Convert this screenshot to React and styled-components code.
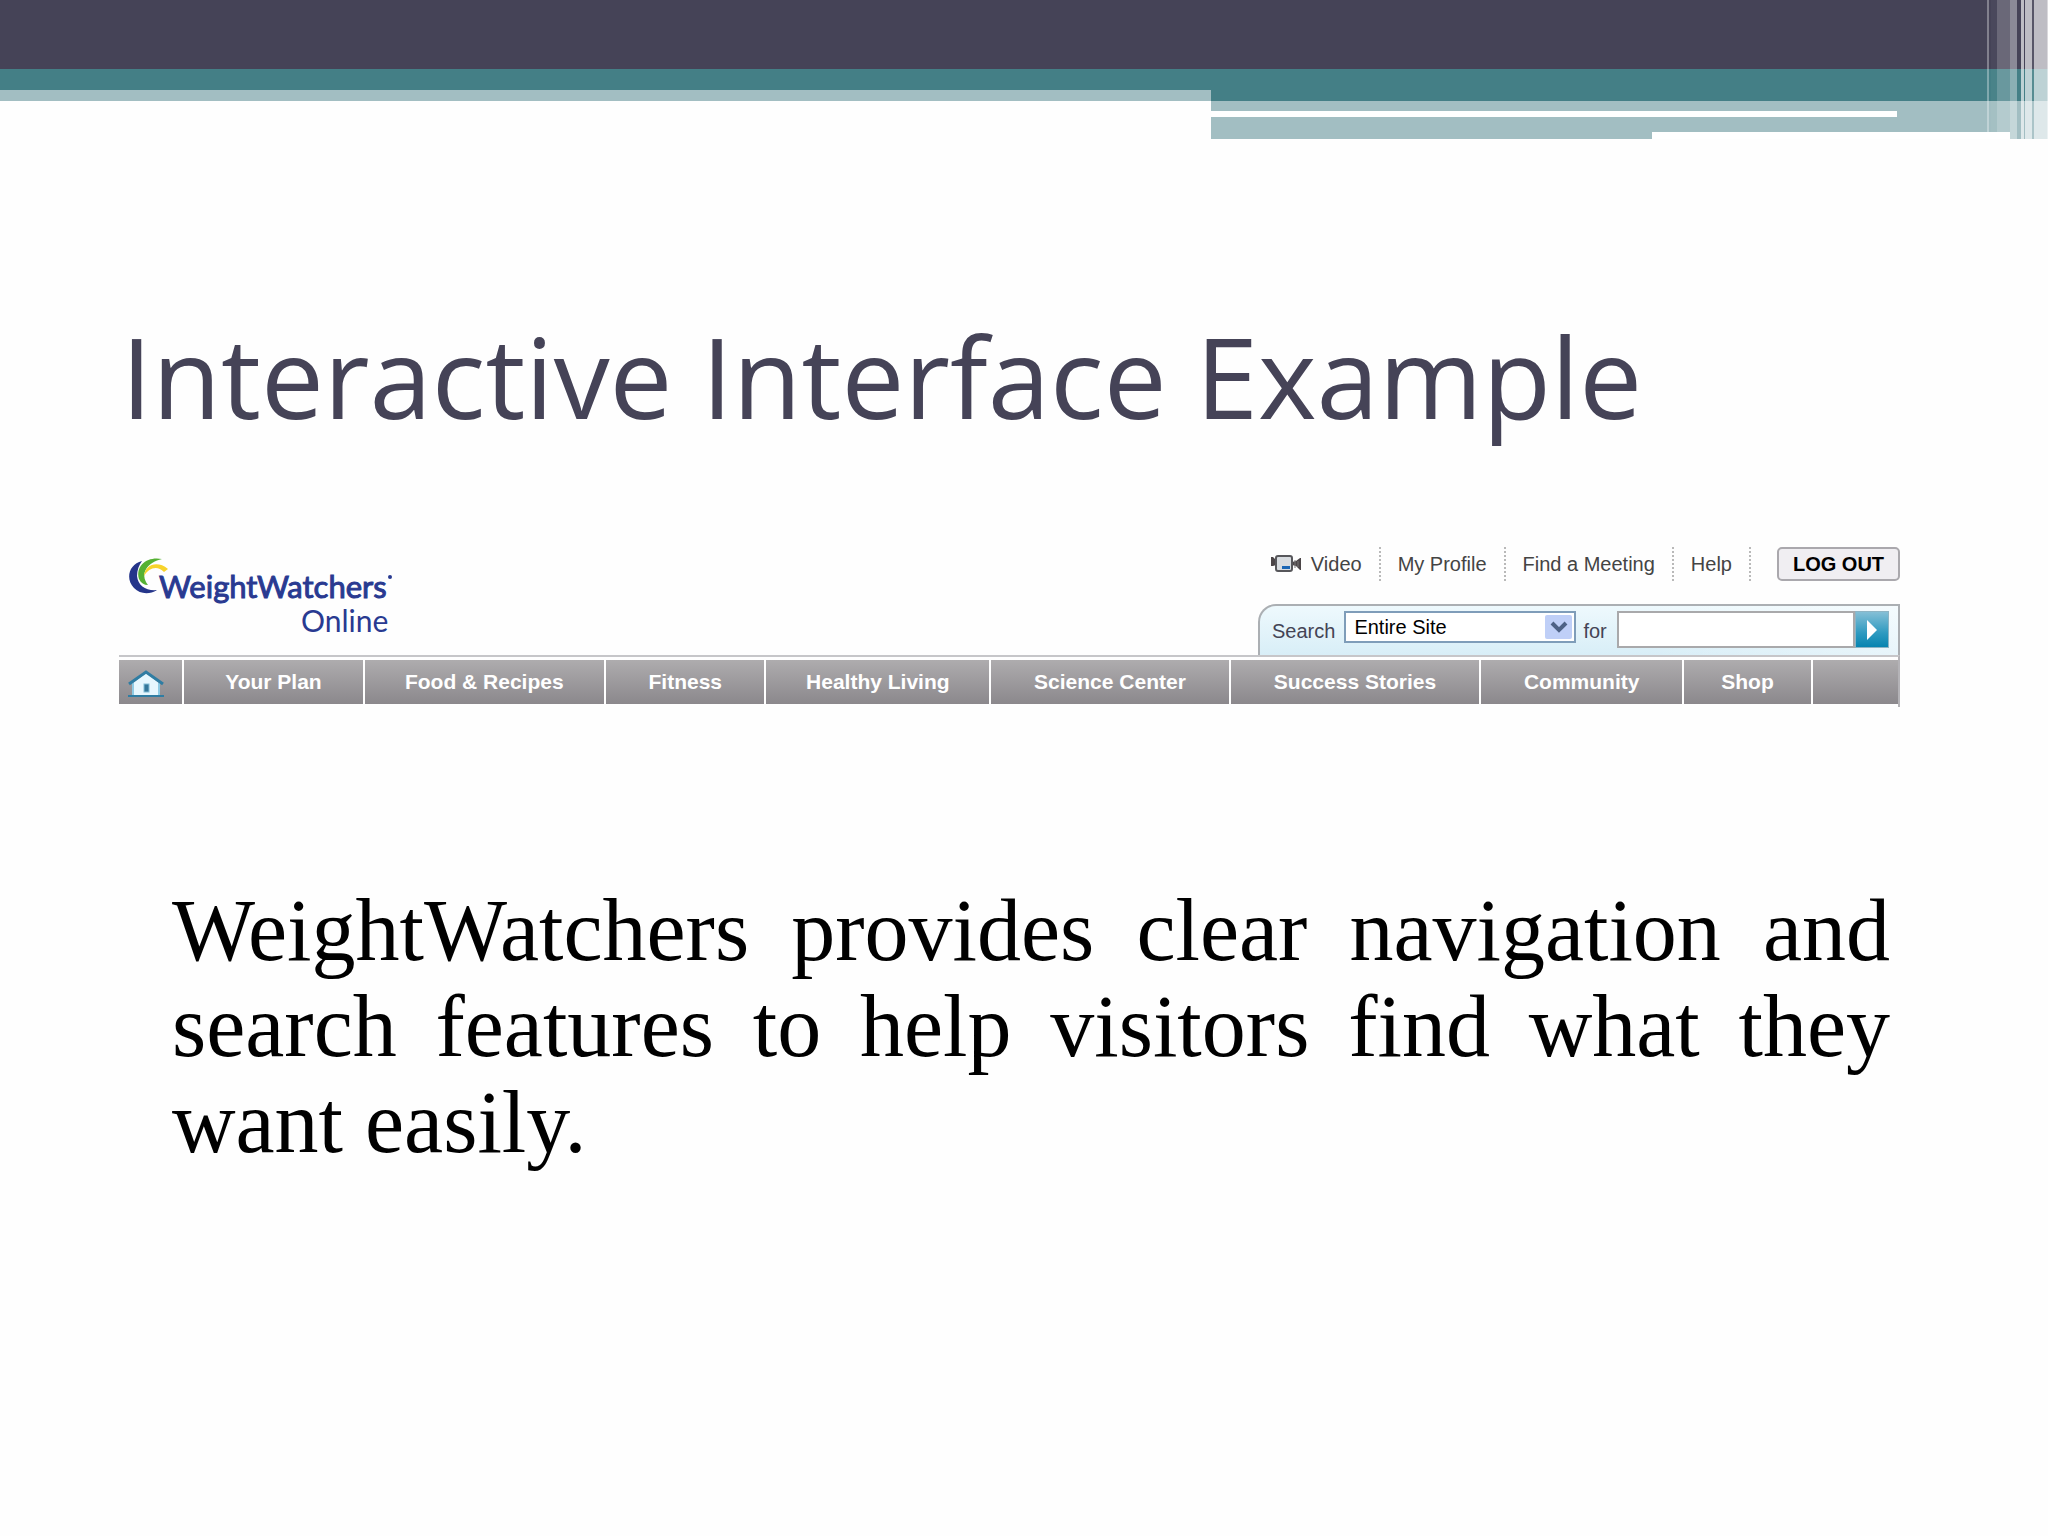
import React from 'react';
import styled, { createGlobalStyle } from 'styled-components';

const GlobalStyle = createGlobalStyle`
  * {
    box-sizing: border-box;
  }

  body {
    margin: 0;
    background: #fefefe;
    font-family: 'Liberation Sans', Arial, sans-serif;
  }
`;

const Banner = styled.div`
  position: relative;
  height: 139px;
`;

const Band = styled.div`
  width: ${props => props.$width || '100%'};
  height: ${props => props.$height}px;
  background: ${props => props.$color};
`;

const BandSplit = styled.div`
  display: grid;
  grid-template-columns: 1211fr 837fr;
`;

const NotchRow = styled.div`
  display: grid;
  grid-template-columns: 441fr 358fr 38px;
  height: 7px;
`;

// Translucent vertical stripes over the right end of the banner
const Stripes = styled.div`
  position: absolute;
  top: 0;
  right: 0;
  display: flex;
  height: 100%;
`;

const Stripe = styled.div`
  width: ${props => props.$width}px;
  background: rgba(255, 255, 255, ${props => props.$alpha});
`;

const Slide = styled.main`
  padding: 168px 148px 0 119px;
`;

const Title = styled.h1`
  margin: 0 0 102px 2px;
  color: #454357;
  font-family: 'Open Sans', sans-serif;
  font-size: 112px;
  font-weight: 400;
  line-height: 137px;
`;

const SiteTop = styled.div`
  display: flex;
  justify-content: space-between;
  align-items: flex-start;
`;

const LogoLink = styled.a`
  display: block;
  padding: 10px 0 0 8px;
`;

const Tools = styled.div`
  flex: none;
  width: 642px;
`;

const UserLinks = styled.div`
  display: flex;
  align-items: center;
  justify-content: flex-end;
  height: 36px;
  margin-bottom: 22px;
`;

const UserLink = styled.a`
  display: flex;
  align-items: center;
  gap: 10px;
  height: 34px;
  padding: 0 17px;
  border-right: 2px dotted #b9b9b9;
  color: #444;
  font-size: 20px;
  text-decoration: none;
  white-space: nowrap;

  &:first-child {
    padding-left: 0;
  }
`;

const LogoutButton = styled.button`
  width: 123px;
  height: 34px;
  margin-left: 26px;
  padding: 0;
  border: 2px solid #aaa8ad;
  border-radius: 5px;
  background: #f0eef2;
  color: #000;
  font-family: inherit;
  font-size: 20px;
  font-weight: 700;
`;

const SearchForm = styled.form`
  display: flex;
  align-items: flex-start;
  height: 51px;
  padding: 5px 9px 0 12px;
  border: 2px solid #abafb3;
  border-bottom: 0;
  border-top-left-radius: 18px;
  background: linear-gradient(to right, rgba(255, 255, 255, 0) 60%, rgba(255, 255, 255, 0.4)),
    linear-gradient(#eef9fd, #d8eef7);
`;

const FieldLabel = styled.label`
  padding-top: 8px;
  color: #445;
  font-size: 20px;
  line-height: 24px;
`;

const SelectBox = styled.div`
  position: relative;
  width: 232px;
  margin: 0 7px 0 9px;
`;

const Select = styled.select`
  appearance: none;
  width: 100%;
  height: 32px;
  padding: 0 36px 0 8px;
  border: 2px solid #7f9db9;
  border-radius: 0;
  background: #fff;
  color: #000;
  font-family: inherit;
  font-size: 20px;
`;

const SelectArrow = styled.svg`
  position: absolute;
  top: 4px;
  right: 4px;
  pointer-events: none;
`;

const SearchInput = styled.input`
  flex: 1;
  min-width: 0;
  height: 37px;
  margin-left: 10px;
  padding: 0 8px;
  border: 2px solid #a9a9ab;
  border-radius: 0;
  background: #fff;
  font-family: inherit;
  font-size: 20px;
`;

const GoButton = styled.button`
  display: flex;
  align-items: center;
  justify-content: center;
  width: 34px;
  height: 37px;
  padding: 0;
  border: 1px solid #8db4c4;
  background: linear-gradient(#85bfd6, #2e9ac0 60%, #0784b0);
`;

const Nav = styled.nav`
  display: flex;
  padding-top: 3px;
  border-top: 2px solid #c6c6c9;
  border-right: 2px solid #b4b3b7;
`;

const NavItem = styled.a`
  display: flex;
  flex: ${props => props.$size} 1 0;
  align-items: center;
  justify-content: center;
  height: 44px;
  margin-bottom: 3px;
  border-right: 2px solid #fff;
  background: linear-gradient(#aeacae, #8b888c);
  color: #fff;
  font-size: 21px;
  font-weight: 700;
  text-decoration: none;
  white-space: nowrap;

  &:last-child {
    border-right: 0;
  }

  svg {
    margin: 3px 10px 0 0;
  }
`;

const Caption = styled.p`
  margin: 176px 10px 0 53px;
  color: #000;
  font-family: 'Liberation Serif', serif;
  font-size: 88px;
  line-height: 96px;
  text-align: justify;
`;

const stripes = [
  [2, 0.33],
  [2, 0],
  [6, 0.03],
  [13, 0.2],
  [7, 0.38],
  [4, 0],
  [3, 0.65],
  [1, 0],
  [7, 0.65],
  [2, 0.1],
  [13, 0.65],
  [1, 0.8]
];

const sections = [
  ['Your Plan', 180],
  ['Food & Recipes', 242],
  ['Fitness', 160],
  ['Healthy Living', 225],
  ['Science Center', 240],
  ['Success Stories', 251],
  ['Community', 203],
  ['Shop', 128]
];

const TEAL = '#447f86';
const PALE = '#a2bec2';

const Logo = () => (
  <svg width="276" height="84" viewBox="0 0 276 84" role="img" aria-label="WeightWatchers Online">
    <path d="M15 5C2 8-2 23 7 32c6 6 15 7 23 2-11 1-19-4-20-14 0-6 2-11 5-15Z" fill="#25358a" />
    <path d="M35 3C21 0 8 9 12 23c2 4 5 6 9 6C12 17 21 6 35 3Z" fill="#55b133" />
    <path d="M17 20C18 9 30 4 41 13l-4 3C30 9 22 12 17 20Z" fill="#f7d32b" />
    <g fill="#293a91" stroke="#293a91" fontFamily="Lato, sans-serif">
      <text x="32" y="42" fontSize="31" strokeWidth="1">WeightWatchers</text>
      <text x="174" y="76" fontSize="30" stroke="none">Online</text>
    </g>
    <circle cx="263" cy="21" r="2" fill="#293a91" />
  </svg>
);

const CameraIcon = () => (
  <svg width="30" height="18" viewBox="0 0 30 18" aria-hidden="true">
    <path d="M0 2h2l3 3v5l-3 1H0ZM21 7l4-1 4-3h1v12h-1l-4-4-4-1Z" fill="#4c4648" />
    <path d="M24 5v8M27 6v6" stroke="#777" />
    <rect x="5" y="1" width="16" height="15" rx="2" fill="#d8dce0" stroke="#57575b" strokeWidth="2" />
    <rect x="11" y="11" width="8" height="3" fill="#1b66b5" />
  </svg>
);

const HomeIcon = () => (
  <svg width="38" height="30" viewBox="0 0 38 30" aria-hidden="true">
    <path d="M6 14 19 4l13 10v12H6Z" fill="#e6f7fe" />
    <path d="M6 14v13M32 14v13" stroke="#8fcbe4" strokeWidth="2" />
    <path d="M2 15 19 3l17 12" fill="none" stroke="#2f7da3" strokeWidth="3" />
    <path d="M1 27h36" stroke="#2f7da3" strokeWidth="2" />
    <rect x="17" y="15" width="5" height="8" fill="#34779a" stroke="#82bdd6" />
  </svg>
);

const PageBanner = () => (
  <Banner>
    <Band $height={69} $color="#454357" />
    <Band $height={21} $color={TEAL} />
    <BandSplit>
      <Band $height={11} $color={PALE} />
      <div>
        <Band $height={11} $color={TEAL} />
        <Band $height={10} $color={PALE} />
        <Band $height={6} $color={PALE}>
          <Band $height={6} $width="82%" $color="#fff" />
        </Band>
        <Band $height={15} $color={PALE} />
        <NotchRow>
          <Band $height={7} $color={PALE} />
          <Band $height={7} $color="#fff" />
          <Band $height={7} $color={PALE} />
        </NotchRow>
      </div>
    </BandSplit>
    <Stripes>
      {stripes.map(([width, alpha], index) => (
        <Stripe key={index} $width={width} $alpha={alpha} />
      ))}
    </Stripes>
  </Banner>
);

const Search = () => (
  <SearchForm onSubmit={event => event.preventDefault()}>
    <FieldLabel htmlFor="scope">Search</FieldLabel>
    <SelectBox>
      <Select id="scope">
        <option>Entire Site</option>
      </Select>
      <SelectArrow width="27" height="24" viewBox="0 0 27 24" aria-hidden="true">
        <rect width="27" height="24" rx="2" fill="#bfcff7" />
        <path d="m7 8 7 7 7-7" fill="none" stroke="#4d6185" strokeWidth="4" />
      </SelectArrow>
    </SelectBox>
    <FieldLabel htmlFor="query">for</FieldLabel>
    <SearchInput id="query" type="text" />
    <GoButton type="submit" aria-label="Go">
      <svg width="12" height="20" viewBox="0 0 12 20" aria-hidden="true">
        <path d="M1 0v20L11 10Z" fill="#fff" />
      </svg>
    </GoButton>
  </SearchForm>
);

const App = () => {
  return (
    <>
      <GlobalStyle />
      <PageBanner />
      <Slide>
        <Title>Interactive Interface Example</Title>
        <section>
          <SiteTop>
            <LogoLink href="#home">
              <Logo />
            </LogoLink>
            <Tools>
              <UserLinks>
                <UserLink href="#video">
                  <CameraIcon />
                  Video
                </UserLink>
                <UserLink href="#profile">My Profile</UserLink>
                <UserLink href="#meeting">Find a Meeting</UserLink>
                <UserLink href="#help">Help</UserLink>
                <LogoutButton type="button">LOG OUT</LogoutButton>
              </UserLinks>
              <Search />
            </Tools>
          </SiteTop>
          <Nav>
            <NavItem href="#home" aria-label="Home" $size={64}>
              <HomeIcon />
            </NavItem>
            {sections.map(([label, size]) => (
              <NavItem key={label} href="#section" $size={size}>
                {label}
              </NavItem>
            ))}
            <NavItem as="span" $size={86} />
          </Nav>
        </section>
        <Caption>
          WeightWatchers provides clear navigation and search features to help visitors find what
          they want easily.
        </Caption>
      </Slide>
    </>
  );
};

export default App;
